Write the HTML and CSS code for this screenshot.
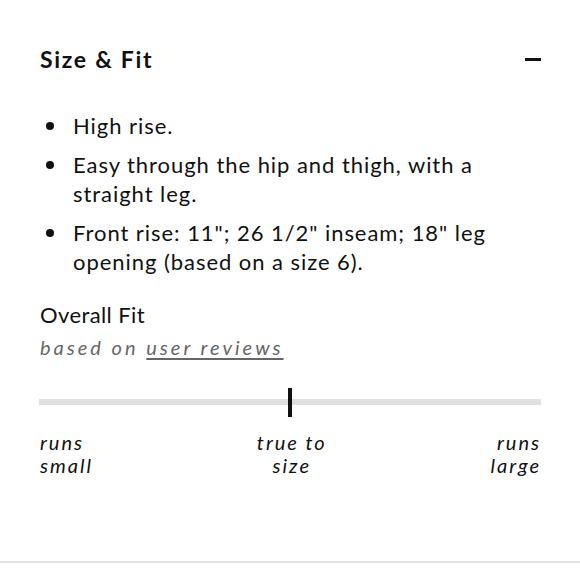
FILE: index.html
```html
<!DOCTYPE html>
<html lang="en">
<head>
<meta charset="utf-8">
<link rel="stylesheet" href="styles.css">
</head>
<body>
<section class="panel">
  <header class="panel-head">
    <h2 class="title">Size &amp; Fit</h2>
    <span class="collapse" aria-label="collapse"></span>
  </header>
  <ul class="details">
    <li>High rise.</li>
    <li>Easy through the hip and thigh, with a straight leg.</li>
    <li>Front rise: 11"; 26 1/2" inseam; 18" leg opening (based on a size 6).</li>
  </ul>
  <div class="fit">
    <h3 class="fit-title">Overall Fit</h3>
    <p class="fit-sub">based on <a href="#">user reviews</a></p>
    <div class="scale">
      <div class="track"><span class="marker" style="left: 50%"></span></div>
      <div class="labels">
        <span class="lab lab-left">runs<br>small</span>
        <span class="lab lab-mid">true to<br>size</span>
        <span class="lab lab-right">runs<br>large</span>
      </div>
    </div>
  </div>
</section>
</body>
</html>
```
FILE: styles.css
```css
* { box-sizing: border-box; }
html, body { margin: 0; padding: 0; background: #fff; }
body {
  font-family: Lato, "Noto Sans", sans-serif;
  color: #111;
  width: 580px;
  height: 580px;
  overflow: hidden;
}
.panel {
  height: 563px;
  border-bottom: 2px solid #e2e2e2;
  padding: 43px 39px 0 40px;
}
.panel-head {
  display: flex;
  justify-content: space-between;
  align-items: center;
  height: 32px;
}
.title {
  margin: 0;
  font-size: 23px;
  font-weight: 700;
  letter-spacing: 1.7px;
}
.collapse {
  width: 16px;
  height: 3px;
  background: #111;
}
.details {
  list-style: none;
  margin: 36px 0 0;
  padding: 0;
  font-size: 22px;
  line-height: 29px;
  letter-spacing: 0.95px;
}
.details li {
  position: relative;
  padding-left: 33px;
  margin-bottom: 10px;
}
.details li::before {
  content: "";
  position: absolute;
  left: 6px;
  top: 11px;
  width: 8px;
  height: 8px;
  border-radius: 50%;
  background: #111;
}
.fit { margin-top: 24px; }
.fit-title {
  margin: 0;
  font-size: 22px;
  font-weight: 400;
  line-height: 29px;
  letter-spacing: 0.4px;
}
.fit-sub {
  margin: 4px 0 0;
  font-size: 20px;
  font-style: italic;
  color: #666;
  letter-spacing: 3px;
  line-height: 28px;
}
.fit-sub a { color: #666; text-decoration: underline; text-underline-offset: 3px; }
.scale { margin-top: 38px; }
.track {
  position: relative;
  height: 6px;
  background: #e0e0e0;
  margin: 11px 0 0 -1px;
}
.marker {
  position: absolute;
  top: -11px;
  width: 4px;
  height: 29px;
  margin-left: -2px;
  background: #111;
}
.labels {
  display: flex;
  justify-content: space-between;
  margin-top: 26px;
  font-size: 20px;
  font-style: italic;
  line-height: 23px;
  letter-spacing: 2px;
}
.lab-left { text-align: left; }
.lab-mid { text-align: center; }
.lab-right { text-align: right; }
```
